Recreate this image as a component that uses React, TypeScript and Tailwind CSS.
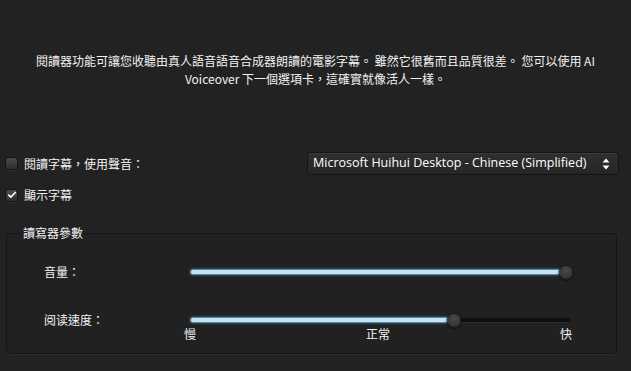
import { Check } from 'lucide-react'

const cjk = '"Noto Sans CJK TC", "Noto Sans CJK SC", sans-serif'

const Checkbox = ({ checked }: { checked?: boolean }) => (
  <span className="flex h-[13px] w-[13px] items-center justify-center rounded-[3px] border border-[#151515] bg-gradient-to-b from-[#4a4a4a] to-[#2e2e2e] shadow-[0_1px_0_rgba(255,255,255,0.06)]">
    {checked && <Check size={10} strokeWidth={4} className="text-white" />}
  </span>
)

const Slider = ({ value }: { value: number }) => (
  <div className="relative h-[14px] w-[380px]">
    <div className="absolute left-0 right-0 top-[5px] h-[4px] rounded-full bg-[#0f0f0f] shadow-[0_1px_0_rgba(255,255,255,0.05)]" />
    <div
      className="absolute left-0 top-[4px] h-[6px] rounded-full border border-[#4d8aa6] bg-[#c4e4f5] shadow-[0_0_3px_rgba(120,190,230,0.5)]"
      style={{ width: `${value}%` }}
    />
    <div
      className="absolute top-0 h-[15px] w-[15px] -translate-x-1/2 rounded-full border border-[#1a1a1a] bg-[radial-gradient(circle_at_50%_35%,#4a4a4a,#2c2c2c)] shadow-[0_1px_2px_rgba(0,0,0,0.6)]"
      style={{ left: `${value}%` }}
    />
  </div>
)

export default function App() {
  return (
    <div
      className="h-[371px] w-[631px] overflow-hidden bg-[#222222] text-[12px] text-[#f2f2f2]"
      style={{ fontFamily: cjk }}
    >
      <p className="px-[20px] pt-[52px] text-center leading-[18px]">
        閱讀器功能可讓您收聽由真人語音語音合成器朗讀的電影字幕。 雖然它很舊而且品質很差。 您可以使用 AI
        <br />
        Voiceover 下一個選項卡，這確實就像活人一樣。
      </p>

      <div className="mt-[64px] flex items-center justify-between pl-[5px] pr-[12px]">
        <label className="flex items-center gap-[6px]">
          <Checkbox />
          <span>閱讀字幕，使用聲音：</span>
        </label>
        <div className="flex h-[23px] w-[312px] items-center justify-between rounded-[3px] border border-[#141414] bg-gradient-to-b from-[#2f2f2f] to-[#262626] pl-[5px] pr-[8px] shadow-[inset_0_1px_0_rgba(255,255,255,0.06)]">
          <span className="text-[12.5px] text-white" style={{ fontFamily: '"Open Sans", "Noto Sans", sans-serif' }}>
            Microsoft Huihui Desktop - Chinese (Simplified)
          </span>
          <svg width="8" height="12" viewBox="0 0 8 12" className="fill-white">
            <path d="M4 0.5 L7.5 4.5 H0.5 Z" />
            <path d="M4 11.5 L7.5 7.5 H0.5 Z" />
          </svg>
        </div>
      </div>

      <label className="mt-[11px] flex items-center gap-[6px] pl-[5px]">
        <Checkbox checked />
        <span>顯示字幕</span>
      </label>

      <fieldset className="mx-[6px] mt-[22px] h-[128px] w-[611px] rounded-[4px] border border-[#151515] bg-[#212121] pl-[37px] shadow-[0_1px_0_rgba(255,255,255,0.04)]">
        <legend className="-ml-[22px] px-[1px] leading-[14px]">讀寫器參數</legend>
        <div className="mt-[23px] flex items-center">
          <span className="w-[146px]">音量：</span>
          <Slider value={99} />
        </div>
        <div className="mt-[30px] flex items-center">
          <span className="w-[146px]">阅读速度：</span>
          <Slider value={69.5} />
        </div>
        <div className="-mt-[2px] ml-[140px] flex w-[388px] justify-between leading-[14px]">
          <span>慢</span>
          <span>正常</span>
          <span>快</span>
        </div>
      </fieldset>
    </div>
  )
}
